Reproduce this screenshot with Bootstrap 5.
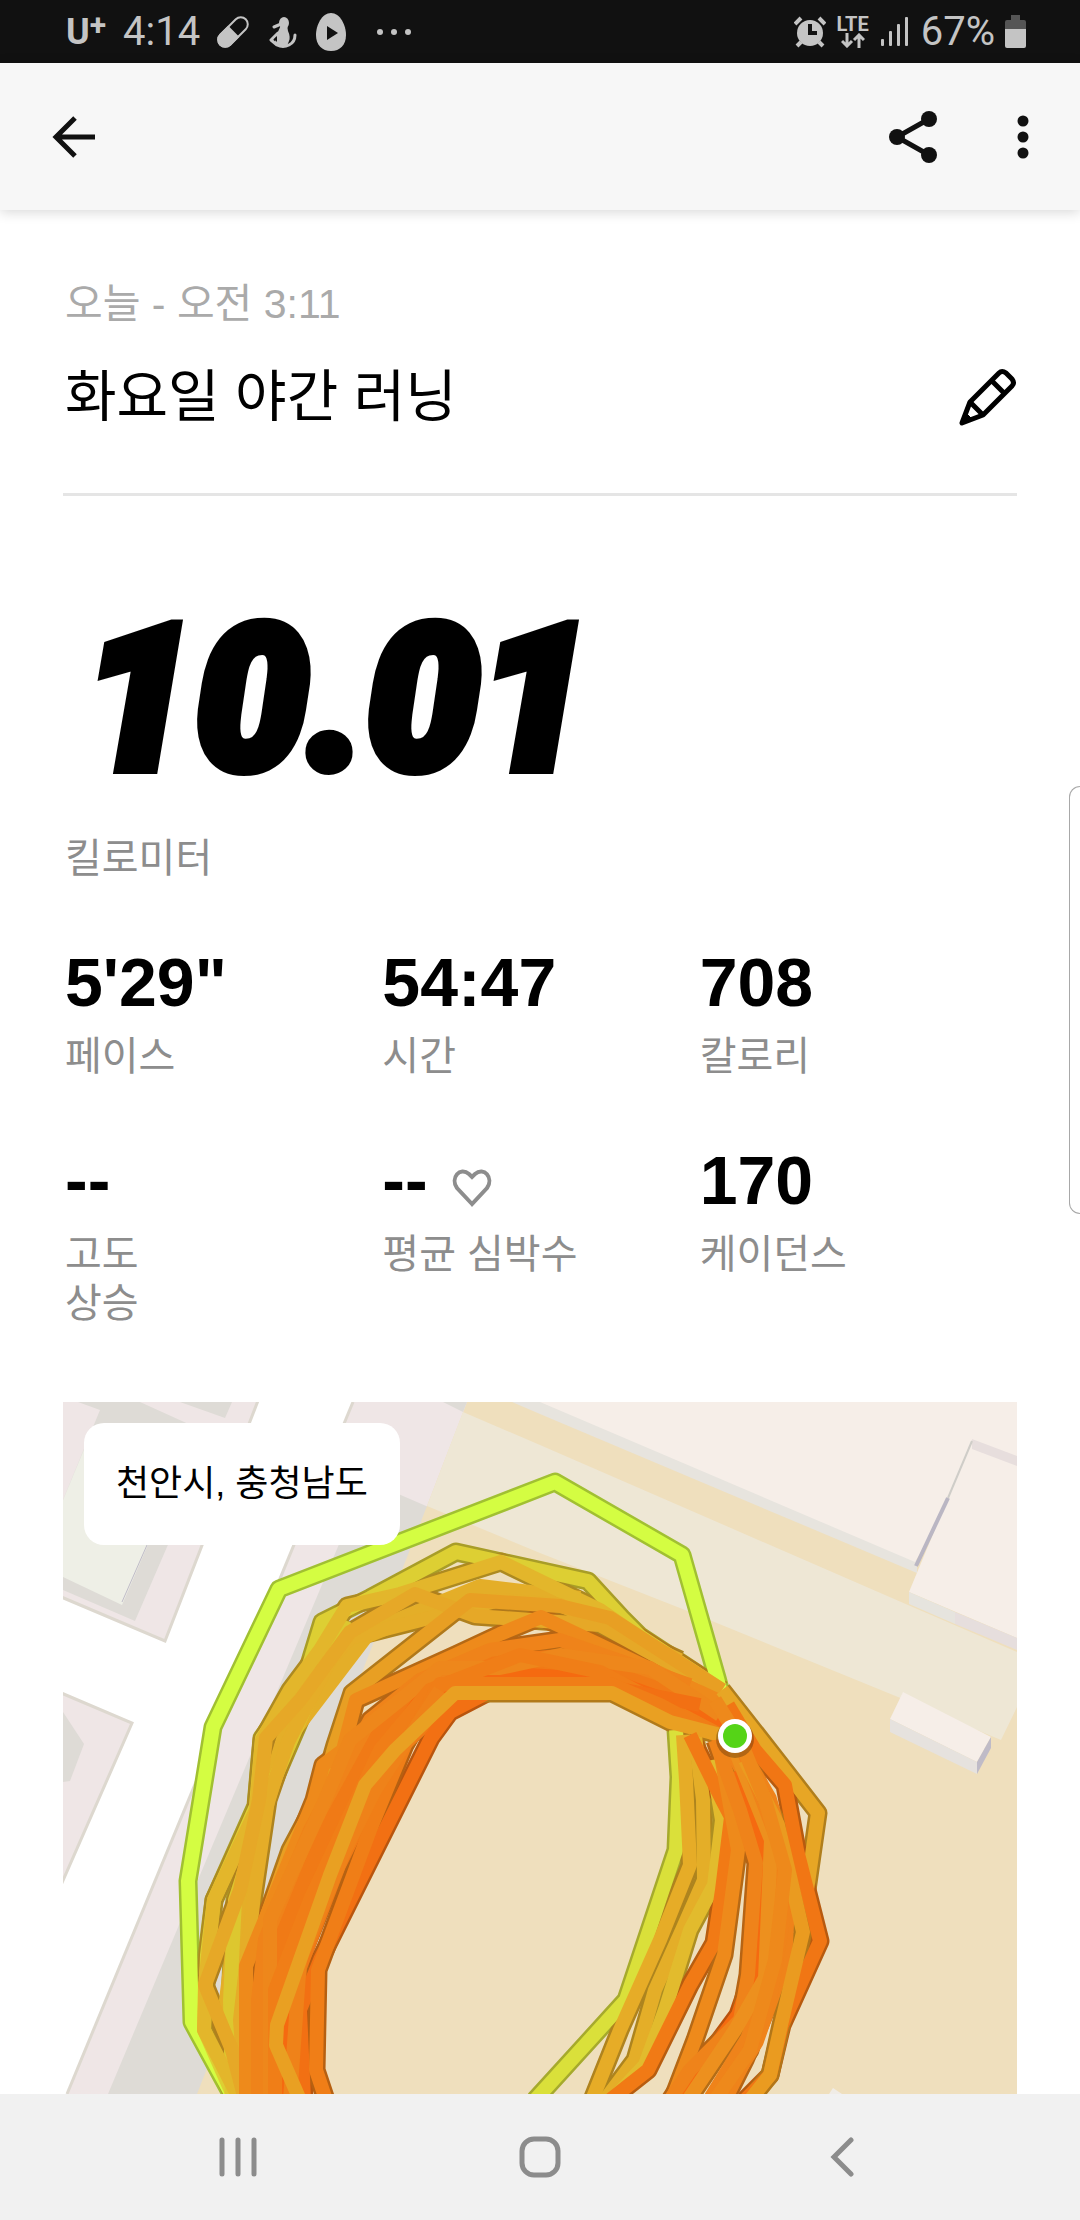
<!DOCTYPE html>
<html lang="ko">
<head>
<meta charset="utf-8">
<meta name="viewport" content="width=device-width, initial-scale=1">
<title>화요일 야간 러닝</title>
<link href="https://cdn.jsdelivr.net/npm/bootstrap@5.3.0/dist/css/bootstrap.min.css" rel="stylesheet">
<style>
  body { font-family: "Liberation Sans", "Noto Sans CJK KR", sans-serif; color: #000; }
  svg { display: block; flex: none; }
  .status { height: 63px; padding: 0 54px 0 66px; background: #111; color: #c4c4c4; font: 40px/60px Roboto, sans-serif; }
  .status-left { gap: 17px; }
  .status-right { gap: 10px; }
  .carrier { font-size: 36px; font-weight: 700; }
  .carrier-plus { font-size: 30px; line-height: 32px; align-self: flex-start; margin-top: 7px; }
  .lte { font-size: 20px; line-height: 18px; font-weight: 700; }
  .appbar { height: 147px; padding: 0 32px; background: #f7f7f7; box-shadow: 0 2px 12px rgba(0,0,0,.16); z-index: 1; }
  .appbar-actions { gap: 60px; }
  .content { padding: 66px 63px 0; }
  .inset { padding-left: 2px; }
  .when { font-size: 41px; line-height: 56px; color: #aaa; }
  .run-title { font-size: 56px; line-height: 80px; font-weight: 400; }
  .title-row { padding: 25px 0 56px; border-bottom: 3px solid #e5e5e5; }
  .distance { font: italic 900 200px/200px Roboto, sans-serif; -webkit-text-stroke: 12px #000; padding: 104px 0 0 20px; }
  .caption { font-size: 40px; line-height: 49px; color: #8d8d8d; }
  .distance-caption { padding-top: 34px; padding-bottom: 61px; }
  .figure-value { font-size: 68px; line-height: 76px; font-weight: 700; }
  .stats { row-gap: 61px; padding-bottom: 74px; }
  .stat-caption { padding-top: 12px; }
  .place { top: 21px; left: 21px; padding: 32px; border-radius: 20px; background: #fff; font-size: 36px; line-height: 58px; }
  .edge-handle { top: 786px; right: 0; width: 11px; height: 428px; border: 1px solid #a8a8a8; border-right: 0; border-radius: 16px 0 0 16px; background: #fff; z-index: 2; }
  .softkeys { height: 126px; padding: 0 164px; background: #f1f1f1; }
  .softkeys .btn { width: 148px; }
  .softkeys .btn svg { margin: auto; }
</style>
<script src="https://cdn.jsdelivr.net/npm/bootstrap@5.3.0/dist/js/bootstrap.bundle.min.js"></script>
</head>
<body class="bg-white position-relative d-flex flex-column min-vh-100 overflow-x-hidden">

<div class="status d-flex justify-content-between">
  <div class="status-left d-flex align-items-center">
    <div class="d-flex align-items-center carrier"><span>U</span><span class="carrier-plus">+</span></div>
    <span>4:14</span>
    <svg width="32" height="34" viewBox="0 0 32 34" fill="none" stroke="#c4c4c4"><g transform="rotate(45 16 17)"><rect x="9" y="-1" width="14" height="36" rx="7" stroke-width="2"/><path d="M9 17h14v11a7 7 0 0 1-14 0z" fill="#c4c4c4" stroke-width="2"/></g></svg>
    <svg width="32" height="34" viewBox="0 0 32 34"><g fill="#c4c4c4"><ellipse cx="18" cy="8" rx="5" ry="6"/><path d="M15 10h6l1 6c2 4 2 8 1 10l-2 5c-6 2-10 0-12-4l2-8z"/></g><path d="M15 9l-7 3M12 18l-7 7 6 5q6 3 12 0 6-3 6-10" fill="none" stroke="#c4c4c4" stroke-width="3" stroke-linejoin="round" stroke-linecap="round"/><path d="M11 21l-3 3 3 3z" fill="#111"/></svg>
    <svg width="32" height="38" viewBox="0 0 32 38"><path d="M16 0C25 0 31 12 31 22C31 32 25 38 16 38S1 32 1 22C1 12 7 0 16 0z" fill="#c4c4c4"/><path d="M12 13v14l11-7z" fill="#111"/></svg>
    <svg width="60" height="8" viewBox="0 0 60 8" fill="#c4c4c4"><circle cx="16" cy="4" r="3"/><circle cx="30" cy="4" r="3"/><circle cx="44" cy="4" r="3"/></svg>
  </div>
  <div class="status-right d-flex align-items-center">
    <svg width="32" height="32" viewBox="0 0 32 32"><circle cx="16" cy="17" r="13" fill="#c4c4c4"/><path d="M1 8l6-6M25 2l6 6M3 30l4-4M29 30l-4-4" stroke="#c4c4c4" stroke-width="4"/><path d="M16 8v9h7" fill="none" stroke="#111" stroke-width="4"/></svg>
    <div class="d-flex flex-column align-items-center lte"><span>LTE</span><svg width="24" height="15" viewBox="0 0 24 15" fill="none" stroke="#c4c4c4" stroke-width="3"><path d="M6 0v13M1 8l5 5 5-5M18 15V2M13 7l5-5 5 5"/></svg></div>
    <svg width="32" height="30" viewBox="0 0 32 30" fill="#c4c4c4"><rect x="2" y="22" width="3" height="7" rx="1"/><rect x="10" y="14" width="3" height="15" rx="1"/><rect x="18" y="7" width="3" height="22" rx="1"/><rect x="26" y="0" width="3" height="29" rx="1"/></svg>
    <span>67%</span>
    <svg width="21" height="33" viewBox="0 0 21 33"><path d="M6 0h9v5h4q2 0 2 2v7H0V7q0-2 2-2h4z" fill="#555"/><path d="M0 14h21v17q0 2-2 2H2q-2 0-2-2z" fill="#c4c4c4"/></svg>
  </div>
</div>

<header class="appbar navbar flex-nowrap justify-content-between">
  <button class="btn border-0 p-3" aria-label="뒤로"><svg width="52" height="52" viewBox="0 0 52 52" fill="none" stroke="#111" stroke-width="5"><path d="M47 26H9M27 7L8 26l19 19"/></svg></button>
  <div class="d-flex align-items-center appbar-actions">
    <button class="btn border-0 p-0" aria-label="공유"><svg width="50" height="54" viewBox="0 0 50 54"><path d="M41 9L9 27l32 18" fill="none" stroke="#111" stroke-width="5"/><g fill="#111"><circle cx="9" cy="27" r="8"/><circle cx="41" cy="9" r="8"/><circle cx="41" cy="45" r="8"/></g></svg></button>
    <button class="btn border-0 p-0" aria-label="메뉴"><svg width="50" height="50" viewBox="0 0 50 50" fill="#111"><circle cx="25" cy="9" r="5.500"/><circle cx="25" cy="25" r="5.500"/><circle cx="25" cy="41" r="5.500"/></svg></button>
  </div>
</header>

<main class="content">
  <div class="when inset">오늘 - 오전 3:11</div>
  <div class="title-row d-flex justify-content-between align-items-center">
    <h1 class="run-title inset m-0">화요일 야간 러닝</h1>
    <button class="btn border-0 p-0" aria-label="이름 편집"><svg width="60" height="60" viewBox="0 0 60 60" fill="none" stroke="#000" stroke-width="5" stroke-linejoin="round"><path d="M5 56l8-21L42 6q3-3 7 0l6 6q3 4 0 7L26 48z"/><path d="M34 13l14 14M13 35l13 13"/><path d="M5 56l10-4-6-6z" fill="#000" stroke-width="1"/></svg></button>
  </div>
  <div class="distance">10.01</div>
  <div class="caption inset distance-caption">킬로미터</div>

  <div class="row gx-0 stats inset">
    <div class="col-4"><div class="figure-value">5'29"</div><div class="caption stat-caption">페이스</div></div>
    <div class="col-4"><div class="figure-value">54:47</div><div class="caption stat-caption">시간</div></div>
    <div class="col-4"><div class="figure-value">708</div><div class="caption stat-caption">칼로리</div></div>
    <div class="col-4"><div class="figure-value">--</div><div class="caption stat-caption">고도<br>상승</div></div>
    <div class="col-4"><div class="figure-value d-flex align-items-center gap-4">--<svg class="mt-3" width="40" height="38" viewBox="0 0 40 38" fill="none" stroke="#8d8d8d" stroke-width="4"><path d="M20 35L5 19C-2 9 8-3 17 5l3 3 3-3c9-8 19 4 12 14z"/></svg></div><div class="caption stat-caption">평균 심박수</div></div>
    <div class="col-4"><div class="figure-value">170</div><div class="caption stat-caption">케이던스</div></div>
  </div>

  <div class="position-relative">
    <svg class="w-100" viewBox="63 1402 954 692" role="img" aria-label="러닝 경로 지도">
      <rect x="63" y="1402" width="954" height="692" fill="#fff"/>
      <!-- blocks west of the road -->
      <path d="M40 1380L266 1380L165 1641L40 1588z" fill="#efe6e6" stroke="#ddd8cf" stroke-width="3"/>
      <path d="M78 1402H140L215 1436L135 1621L63 1590V1500L100 1410z" fill="#dedbd6"/>
      <path d="M180 1402h52l-7 16z" fill="#dedbd6"/>
      <path d="M63 1500L90 1435L180 1470L122 1605L63 1577z" fill="#eeefe6"/>
      <path d="M147 1545L122 1602" stroke="#c0bcc8" stroke-width="1"/>
      <path d="M40 1684L132 1723L40 1933z" fill="#efe6e6" stroke="#ddd8cf" stroke-width="3"/>
      <path d="M63 1712L84 1744L70 1781L63 1782z" fill="#dedbd6"/>
      <!-- kerb, shadow and sand field -->
      <path d="M353 1402H480V2094H67z" fill="#efe6e6"/>
      <path d="M353 1402L67 2094" stroke="#ddd8cf" stroke-width="3"/>
      <path d="M366 1480L440 1512L300 2094H108z" fill="#dedbd6"/>
      <path d="M467 1402H1017V2094H197L427 1506z" fill="#efdfbd"/>
      <path d="M443 1402h24l-4 10z" fill="#dedbd6"/>
      <path d="M463 1412L540 1445L908 1605L1017 1652V1707L1001 1740L898 1697L685 1610L540 1553L427 1506z" fill="#eee7d5"/>
      <!-- buildings -->
      <path d="M512 1402H560L917 1560V1573L540 1414z" fill="#e7e4de"/>
      <path d="M540 1402H1017V1470H972L915 1562z" fill="#f6eee8"/>
      <path d="M972 1440L1017 1457V1638L909 1592z" fill="#f6eee8"/>
      <path d="M972 1439L1017 1456V1466L972 1449z" fill="#e7dedd"/>
      <path d="M909 1592L955 1612V1624L909 1604z" fill="#e6e4de"/>
      <path d="M955 1612L1017 1638V1650L955 1624z" fill="#e6dedd"/>
      <path d="M972 1441L948 1498" stroke="#cfcdc8" stroke-width="2"/>
      <path d="M948 1498L916 1566" stroke="#bab6c3" stroke-width="4"/>
      <path d="M903 1692L991 1737L977 1762L890 1719z" fill="#f6eee8"/>
      <path d="M890 1719L977 1762V1774L890 1732z" fill="#e6e2de"/>
      <path d="M991 1737V1748L977 1774V1762z" fill="#bfbbc7"/>
      <path d="M829 2094l4-6 9 6z" fill="#f0ece6"/>
      <defs>
        <g id="laps" fill="none" stroke-linejoin="round">
          <path stroke="#d4fd42" d="M735 1745L717 1678L682 1555L555 1482L279 1589L213 1727L188 1881L192 2022L240 2110"/>
          <path stroke="#dae03a" d="M676 1730L679 1777L676 1850L626 2000L535 2100"/>
          <path stroke="#ddcf33" d="M722 1690L640 1636L622 1618L588 1581L456 1552L370 1598L322 1622L305 1678L262 1738L256 1806L214 1900L207 1955L204 2030L235 2100"/>
          <path stroke="#ddc72f" d="M345 1620L300 1720L270 1790L235 1900L230 2000L232 2100"/>
          <path stroke="#e3b62b" d="M715 1690L600 1610L501 1562L400 1594L347 1606L320 1650L290 1690L262 1740L256 1810L214 1900L205 1985L204 2030L240 2100"/>
          <path stroke="#e5ad28" d="M680 1660L560 1605L500 1600L350 1638L330 1660L288 1742L268 1800L254 1895L240 2020L246 2100"/>
          <path stroke="#e6a827" d="M700 1680L600 1625L475 1616L415 1594L350 1632L300 1700L266 1738L259 1800L240 1890L205 1985L232 2050L245 2100"/>
          <path stroke="#e89f23" d="M722 1690L610 1618L560 1606L470 1600L352 1693L335 1745L322 1790L290 1850L260 1935"/>
          <path stroke="#e6ac27" d="M683 1735L686 1780L690 1865L660 1940L620 2030L592 2100"/>
          <path stroke="#e4ae28" d="M695 1735L703 1800L704 1880L682 1930L655 1990L635 2060L605 2100"/>
          <path stroke="#e2bb2d" d="M712 1760L722 1820L714 1885L690 1930L665 2010L645 2065L612 2100"/>
          <path stroke="#f56a10" d="M735 1725L610 1680L480 1672L420 1700L385 1750L340 1840L300 1950L285 2010V2100"/>
          <path stroke="#f56a10" d="M740 1770L760 1840L762 1900L752 1975L738 2015L705 2060L685 2100"/>
          <path stroke="#ee8a1b" d="M728 1705L640 1664L541 1617L500 1634L455 1655L356 1700L343 1750L323 1765L314 1800L246 1966V2100"/>
          <path stroke="#ef831a" d="M690 1685L560 1640L490 1650L420 1680L370 1720L310 1830L265 1940L258 2000V2100"/>
          <path stroke="#ee871b" d="M720 1715L650 1668L560 1655L500 1668L440 1668L350 1740L325 1800L270 1920V2100"/>
          <path stroke="#f07e17" d="M720 1735L600 1672L520 1655L430 1690L380 1750L310 1900L275 1990V2100"/>
          <path stroke="#f27013" d="M700 1705L600 1685L500 1686L450 1712L431 1738L320 1960L300 2010L304 2100"/>
          <path stroke="#f07e17" d="M735 1745L660 1705L610 1684L440 1684L405 1745L370 1830L318 1970L316 2070L326 2100"/>
          <path stroke="#ef8219" d="M440 1690L375 1790L345 1850L300 1960L290 2100"/>
          <path stroke="#e9a022" d="M740 1740L670 1722L612 1693H455L395 1750L365 1785L330 1875L277 2025L276 2045L300 2100"/>
          <path stroke="#f17a15" d="M690 1735L722 1800L731 1817L722 1890L714 1943L690 1985L648 2070L610 2100"/>
          <path stroke="#ee8a1b" d="M720 1750L738 1850L724 1955L695 2040L672 2100"/>
          <path stroke="#ef831a" d="M715 1740L740 1810L756 1863L748 1975L740 2020L690 2070L670 2100"/>
          <path stroke="#ed901e" d="M735 1750L771 1840L765 1978L735 2030L688 2100"/>
          <path stroke="#e7a625" d="M722 1690L773 1755L818 1813L807 1890"/>
          <path stroke="#f17614" d="M728 1705L755 1750L785 1785L797 1850L820 1941L782 2025L770 2075L745 2100"/>
          <path stroke="#ef831a" d="M745 1755L785 1860L783 1920L770 2000L745 2060L725 2100"/>
          <path stroke="#ea9b20" d="M745 1760L778 1825L803 1932L781 2025L770 2075L750 2100"/>
          <path stroke="#ee891b" d="M715 1700L740 1740L765 1800L785 1870L775 1960L750 2050L715 2100"/>
        </g>
      </defs>
      <use href="#laps" stroke-width="19" style="filter: brightness(.76)"/>
      <g fill="none" stroke-linejoin="round">
        <path stroke="#e4ae28" stroke-width="18" d="M580 1600L480 1588L365 1635L285 1740L265 1805L238 1920L228 2000L240 2100"/>
        <path stroke="#f07a16" stroke-width="44" d="M710 1715L600 1668L450 1680L382 1745L325 1860L285 1965L278 2100"/>
        <path stroke="#ef831a" stroke-width="24" d="M730 1740L765 1800L785 1870L780 1960L752 2040L715 2100"/>
      </g>
      <use href="#laps" stroke-width="14"/>
      <circle cx="735" cy="1739" r="19" fill="#000" opacity=".25"/>
      <circle cx="735" cy="1736" r="17" fill="#fff"/>
      <circle cx="735" cy="1736" r="12" fill="#55d417"/>
    </svg>
    <div class="place position-absolute">천안시, 충청남도</div>
  </div>
</main>

<nav class="softkeys d-flex justify-content-between align-items-center mt-auto">
  <button class="btn border-0 p-0" aria-label="최근 앱"><svg width="40" height="42" viewBox="0 0 40 42" stroke="#8c8c8c" stroke-width="5" stroke-linecap="round"><path d="M4 4v34M20 4v34M36 4v34"/></svg></button>
  <button class="btn border-0 p-0" aria-label="홈"><svg width="42" height="42" viewBox="0 0 42 42" fill="none" stroke="#8c8c8c" stroke-width="5"><rect x="3" y="3" width="36" height="36" rx="12"/></svg></button>
  <button class="btn border-0 p-0" aria-label="뒤로 가기"><svg width="24" height="42" viewBox="0 0 24 42" fill="none" stroke="#8c8c8c" stroke-width="5" stroke-linecap="round"><path d="M21 4L4 21l17 17"/></svg></button>
</nav>

<div class="edge-handle position-absolute"></div>
</body>
</html>
